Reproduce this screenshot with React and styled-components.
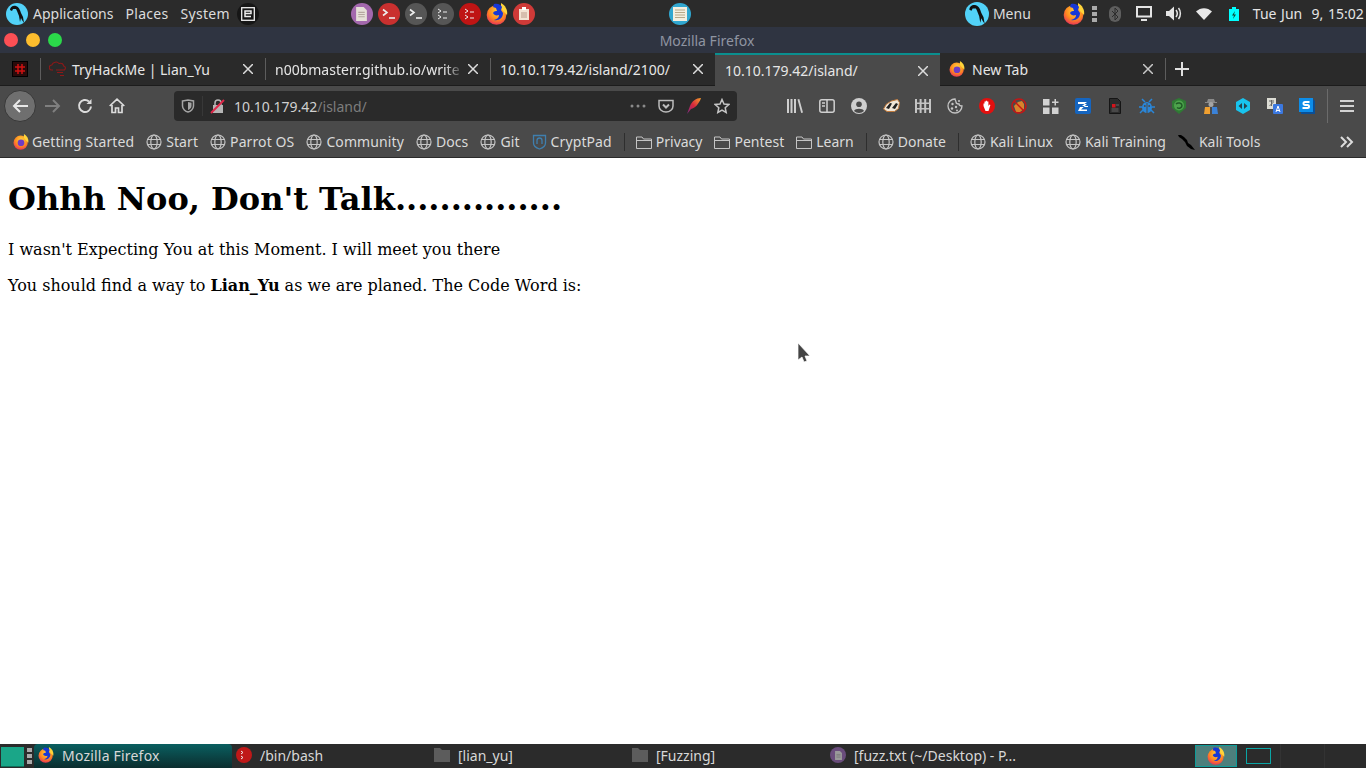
import React from "react";
import styled, { createGlobalStyle } from "styled-components";

const GlobalStyle = createGlobalStyle`
  html, body {
    margin: 0;
    padding: 0;
    height: 100%;
    overflow: hidden;
    background: #fff;
  }
  #root {
    height: 100%;
  }
  svg {
    flex: none;
  }
`;

const Desktop = styled.div`
  position: relative;
  width: 1366px;
  height: 768px;
  display: flex;
  flex-direction: column;
  font-family: "Noto Sans", sans-serif;
  font-size: 14px;
  color: #d8d8d8;
  overflow: hidden;
`;

/* top gnome/mate panel */
const Panel = styled.div`
  height: 27px;
  flex: none;
  background: #2b2b2b;
  display: flex;
  align-items: center;
  padding-left: 6px;
`;

const PanelText = styled.span`
  margin-left: ${(p) => p.$ml || 0}px;
  letter-spacing: ${(p) => p.$ls || 0}px;
  color: #dcdcdc;
  white-space: nowrap;
`;

const Launchers = styled.div`
  display: flex;
  gap: 5px;
  margin-left: ${(p) => p.$ml || 0}px;
`;

const Disc = styled.div`
  width: ${(p) => p.$size || 22}px;
  height: ${(p) => p.$size || 22}px;
  border-radius: 50%;
  background: ${(p) => p.$bg};
  flex: none;
  display: flex;
  align-items: center;
  justify-content: center;
  margin-left: ${(p) => p.$ml || 0}px;
`;

const Tray = styled.div`
  display: flex;
  align-items: center;
  flex: none;
  margin-left: ${(p) => p.$ml || 0}px;
`;

const Clock = styled.span`
  margin-left: 14px;
  color: #e4e4e4;
  white-space: pre;
  word-spacing: 1px;
`;

/* window title */
const TitleBar = styled.div`
  position: relative;
  height: 26px;
  flex: none;
  background: #2f3441;
  display: flex;
  align-items: center;
  justify-content: center;
  padding-left: 48px;
  color: #8f95a1;
`;

const Lights = styled.div`
  position: absolute;
  left: 4px;
  top: 6px;
  display: flex;
  gap: 8px;
`;

const Light = styled.span`
  width: 14px;
  height: 14px;
  border-radius: 50%;
  background: ${(p) => p.$c};
`;

/* firefox tabs */
const TabStrip = styled.div`
  height: 33px;
  flex: none;
  background: #2a2a2a;
  border-bottom: 1px solid #1c1c1c;
  box-sizing: border-box;
  display: flex;
  align-items: stretch;
`;

const PinnedTab = styled.div`
  width: 40px;
  flex: none;
  display: flex;
  align-items: center;
  padding-left: 12px;
  box-sizing: border-box;
`;

const Tab = styled.div`
  width: 225px;
  flex: none;
  box-sizing: border-box;
  position: relative;
  display: flex;
  align-items: center;
  gap: 4px;
  padding: 0 12px 0 ${(p) => (p.$icon ? 9 : 10)}px;
  color: #e6e6e6;
  background: ${(p) => (p.$active ? "#4a4a4a" : "transparent")};
  border-top: ${(p) => (p.$active ? "2px solid #0a8f8f" : "0")};
  margin-bottom: ${(p) => (p.$active ? "-1px" : "0")};
  ${(p) =>
    p.$sep &&
    `&::before {
       content: "";
       position: absolute;
       left: 0;
       top: 5px;
       bottom: 5px;
       width: 1px;
       background: #5d5d5d;
     }`}
`;

const TabFavicon = styled.span`
  display: flex;
  margin-right: 2px;
`;

const TabLabel = styled.span`
  flex: 1;
  min-width: 0;
  white-space: nowrap;
  margin-left: ${(p) => p.$ml || 0}px;
  -webkit-mask-image: ${(p) =>
    p.$fade ? "linear-gradient(90deg, #000 90%, transparent)" : "none"};
  mask-image: ${(p) =>
    p.$fade ? "linear-gradient(90deg, #000 90%, transparent)" : "none"};
`;

const NewTabButton = styled.div`
  width: 34px;
  display: flex;
  align-items: center;
  justify-content: center;
  position: relative;
  &::before {
    content: "";
    position: absolute;
    left: 0;
    top: 5px;
    bottom: 5px;
    width: 1px;
    background: #5d5d5d;
  }
`;

/* nav toolbar */
const Toolbar = styled.div`
  height: 40px;
  flex: none;
  background: #4a4a4a;
  display: flex;
  align-items: center;
  padding-left: 4px;
`;

const BackButton = styled.div`
  width: 32px;
  height: 32px;
  flex: none;
  border-radius: 50%;
  box-sizing: border-box;
  background: #6f6f6f;
  border: 1px solid #383838;
  display: flex;
  align-items: center;
  justify-content: center;
`;

const NavIcon = styled.div`
  width: 16px;
  height: 16px;
  flex: none;
  display: flex;
  margin-left: ${(p) => p.$ml ?? 16}px;
`;

const UrlBar = styled.div`
  width: 563px;
  height: 30px;
  flex: none;
  margin-left: 49px;
  background: #2a2a2a;
  border-radius: 4px;
  display: flex;
  align-items: center;
  padding-left: 7px;
  box-sizing: border-box;
`;

const UrlDivider = styled.span`
  width: 1px;
  height: 20px;
  background: #383838;
  margin: 0 7px 0 7px;
`;

const UrlHost = styled.span`
  margin-left: 8px;
  color: #d0d0d0;
`;

const UrlPath = styled.span`
  color: #7d7d7d;
  flex: 1;
`;

const UrlActions = styled.div`
  display: flex;
  align-items: center;
  gap: 12px;
  padding-right: 7px;
`;

const ExtIcons = styled.div`
  display: flex;
  align-items: center;
  gap: 16px;
  margin-left: 50px;
`;

const ExtSlot = styled.div`
  width: 16px;
  height: 18px;
  flex: none;
  display: flex;
  align-items: center;
  justify-content: center;
`;

const ToolbarSep = styled.span`
  width: 1px;
  height: 34px;
  background: #6b6b6b;
  margin: 0 12px 0 12px;
`;

/* bookmarks */
const BookmarkBar = styled.div`
  height: 32px;
  flex: none;
  box-sizing: border-box;
  background: #4a4a4a;
  border-bottom: 1px solid #2a2a2a;
  display: flex;
  align-items: center;
  padding: 0 12px 0 13px;
  color: #dadada;
`;

const BookmarkGroup = styled.div`
  display: flex;
  align-items: center;
  gap: 12px;
  letter-spacing: ${(p) => p.$ls || 0}px;
`;

const Bookmark = styled.div`
  display: flex;
  align-items: center;
  gap: 4px;
  white-space: nowrap;
`;

const BookmarkFavicon = styled.span`
  display: flex;
  margin-right: -1px;
`;

const BookmarkSep = styled.span`
  width: 1px;
  height: 18px;
  background: #2e2e2e;
  margin: 0 11px 0 12px;
`;

const Chevron = styled.div`
  margin-left: auto;
  display: flex;
`;

/* the page itself */
const Page = styled.main`
  flex: 1;
  background: #fff;
  color: #000;
  font-family: "DejaVu Serif", serif;
  font-size: 16px;
  padding: 23px 8px 0;
  min-height: 0;
`;

const Heading = styled.h1`
  font-size: 32px;
  line-height: 37px;
  margin: 0 0 22px;
  font-weight: 700;
`;

const Para = styled.p`
  font-size: 16px;
  line-height: 19px;
  margin: 0 0 17px;
`;

const Cursor = styled.svg`
  position: absolute;
  left: 796px;
  top: 341px;
`;

/* bottom taskbar */
const Taskbar = styled.div`
  height: 24px;
  flex: none;
  background: #2b2b2b;
  display: flex;
  align-items: stretch;
`;

const ShowDesktop = styled.div`
  width: 23px;
  margin: 3px 0 1px 1px;
  background: #1aa688;
  border-bottom: 1px solid #0e6d5a;
  flex: none;
`;

const Handle = styled.div`
  width: 10px;
  flex: none;
  display: flex;
  align-items: center;
  justify-content: center;
`;

const TaskItem = styled.div`
  width: 198px;
  flex: none;
  box-sizing: border-box;
  display: flex;
  align-items: center;
  gap: 8px;
  padding: 0 0 2px 4px;
  color: #d8d8d8;
  white-space: nowrap;
  letter-spacing: ${(p) => (p.$active ? 0.2 : 0)}px;
  border-radius: ${(p) => (p.$active ? "4px 4px 0 0" : "0")};
  background: ${(p) =>
    p.$active ? "linear-gradient(180deg, #0a5f60 0%, #0b2d2e 100%)" : "none"};
`;

const Pager = styled.div`
  margin-left: auto;
  display: flex;
  align-items: center;
  padding-right: 41px;
`;

const PagerCell = styled.div`
  box-sizing: border-box;
  width: ${(p) => p.$w}px;
  height: ${(p) => p.$h}px;
  border: ${(p) => (p.$on ? "1px solid #0e9c99" : "1px solid #0aa5a5")};
  background: ${(p) => (p.$on ? "#4d7f7c" : "transparent")};
  margin-left: ${(p) => p.$ml || 0}px;
  display: flex;
  align-items: center;
  justify-content: center;
`;

const PagerDivider = styled.span`
  width: 1px;
  height: 24px;
  background: #333;
  margin-left: ${(p) => p.$ml}px;
`;

/* ---- drawings ---- */
const Parrot = ({ size = 22 }) => (
  <svg width={size} height={size} viewBox="0 0 22 22">
    <circle cx="11" cy="11" r="11" fill="#52d2f8" />
    <path
      d="M4 7c0-3 3-5 6-4 3 1 4 4 5 7l2 4 1 6-2-3-1-2-1 4-1-6-2-5-1-2-3 0-1 2z"
      fill="#111"
    />
  </svg>
);

const Firefox = ({ size = 22, purple }) => (
  <svg width={size} height={size} viewBox="0 0 22 22">
    <defs>
      <radialGradient id={purple ? "ffp" : "ffb"} cx="0.55" cy="0.3" r="0.85">
        <stop offset="0" stopColor="#ffd23c" />
        <stop offset="0.5" stopColor="#ff8a1f" />
        <stop offset="0.85" stopColor="#e8305a" />
        <stop offset="1" stopColor="#b52b8e" />
      </radialGradient>
    </defs>
    <circle cx="10.500" cy="12" r="9.800" fill={`url(#${purple ? "ffp" : "ffb"})`} />
    <path d="M15 0c4 2 7 7 6 12l-4-4-2-3z" fill="#ffd43a" />
    {purple ? (
      <circle cx="11" cy="12" r="4.600" fill="#6f3cc4" />
    ) : (
      <path
        d="M8 1c4-1 7 1 8 3l-1 3 2 3c0 5-4 8-9 7 3-1 5-2 5-5-3 1-5 0-6-2 1-2 3-2 4-2l-1-3-3-1z"
        fill="#1737d6"
      />
    )}
  </svg>
);

const Prompt = ({ double }) =>
  double ? (
    <svg width="12" height="12" viewBox="0 0 12 12" fill="none" stroke="#eee" strokeWidth="1">
      <path d="M1 1l3 2-3 2M1 7l3 2-3 2" />
      <path d="M6 4h4M6 10h4" />
    </svg>
  ) : (
    <svg width="14" height="12" viewBox="0 0 14 12" fill="none" stroke="#eee" strokeWidth="1.600">
      <path d="M1 1.500l4 3-4 3" />
      <path d="M7 10h6" />
    </svg>
  );

const Note = ({ fill = "#eee", line = "#999", w = 10, h = 13 }) => (
  <svg width={w} height={h} viewBox="0 0 10 13">
    <path d="M0 0h7l3 3v10H0z" fill={fill} />
    <path d="M2 5h6M2 7h6M2 9h6" stroke={line} strokeWidth="1" />
  </svg>
);

const Clipboard = () => (
  <svg width="10" height="13" viewBox="0 0 10 13">
    <path d="M0 2h10v11H0z" fill="#f3e3d3" />
    <path d="M3 0h4v3H3z" fill="#fff" />
    <path d="M2 6h6M2 8h6M2 10h6" stroke="#b98" strokeWidth="1" />
  </svg>
);

const Articles = () => (
  <svg width="14" height="14" viewBox="0 0 14 14">
    <path d="M0 0h14v14H0z" fill="#f4efe0" />
    <path d="M2 3h10M2 5.500h10M2 8h10M2 10.500h10" stroke="#b8a888" strokeWidth="1" />
  </svg>
);

const Handle3 = ({ h = 4 }) => (
  <svg width="5" height={h * 3 + 4} viewBox={`0 0 5 ${h * 3 + 4}`} fill="#aaa">
    <rect width="5" height={h} />
    <rect y={h + 2} width="5" height={h} />
    <rect y={h * 2 + 4} width="5" height={h} />
  </svg>
);

const TrayBluetooth = () => (
  <svg width="12" height="16" viewBox="0 0 12 16">
    <rect width="12" height="16" rx="6" fill="#5e5e5e" />
    <path d="M3 5l6 6-3 3V2l3 3-6 6" fill="none" stroke="#2b2b2b" strokeWidth="1" />
  </svg>
);

const TrayMonitor = () => (
  <svg width="16" height="15" viewBox="0 0 16 15">
    <path d="M1 1h14v9.500H1z" fill="none" stroke="#e4e4e4" strokeWidth="2" />
    <path d="M5 13h6v2H5z" fill="#e4e4e4" />
  </svg>
);

const TrayVolume = () => (
  <svg width="16" height="15" viewBox="0 0 16 15">
    <path d="M0 5h3l5-4.500v14L3 10H0z" fill="#e4e4e4" />
    <path d="M10 4c1.500 2 1.500 5 0 7M12.500 2c2.500 3 2.500 8 0 11" fill="none" stroke="#e4e4e4" strokeWidth="1.500" />
  </svg>
);

const TrayWifi = () => (
  <svg width="16" height="12" viewBox="0 0 16 12">
    <path d="M0 3.500C4.500-1 11.500-1 16 3.500L8 12z" fill="#e8e8e8" />
  </svg>
);

const TrayBattery = () => (
  <svg width="10" height="14" viewBox="0 0 10 14">
    <path d="M3 0h4v2H3zM0 2h10v12H0z" fill="#0ff" />
    <path d="M6 4L3 8.500h2L4 12l3-4.500H5z" fill="#143" />
  </svg>
);

const Lock = () => (
  <svg width="16" height="16" viewBox="0 0 16 16">
    <path d="M3 7h10v8H3z" fill="#b5b5b5" />
    <path d="M5 7V5a3 3 0 0 1 6 0v2" fill="none" stroke="#b5b5b5" strokeWidth="1.500" />
    <path d="M1 15L14 2" stroke="#e0284a" strokeWidth="2" />
  </svg>
);

const Shield = () => (
  <svg width="14" height="14" viewBox="0 0 14 14">
    <path d="M1.500 2L7 1l5.500 1v5c0 3-3 5.500-5.500 6-2.500-.5-5.500-3-5.500-6z" fill="none" stroke="#a5a5a5" strokeWidth="1.500" />
    <path d="M7 3l3.500.7V7C10.500 9 8.500 10.500 7 11z" fill="#a5a5a5" />
  </svg>
);

const ThreeDots = () => (
  <svg width="16" height="4" viewBox="0 0 16 4" fill="#8a8a8a">
    <circle cx="2" cy="2" r="1.500" />
    <circle cx="8" cy="2" r="1.500" />
    <circle cx="14" cy="2" r="1.500" />
  </svg>
);

const Pocket = () => (
  <svg width="16" height="16" viewBox="0 0 16 16" fill="none" stroke="#bcbcbc" strokeWidth="1.500">
    <path d="M1 2.500h14V8a7 6 0 0 1-14 0z" />
    <path d="M5 6.500l3 3 3-3" strokeWidth="2" />
  </svg>
);

const Feather = () => (
  <svg width="16" height="16" viewBox="0 0 16 16">
    <defs>
      <linearGradient id="fth" x1="1" y1="0" x2="0" y2="1">
        <stop offset="0" stopColor="#f6a02a" />
        <stop offset="0.5" stopColor="#d8263c" />
        <stop offset="1" stopColor="#7a2a8a" />
      </linearGradient>
    </defs>
    <path d="M15 0c-5 0-9 3-11 8L1 16l4-5c4-1 8-5 10-11z" fill="url(#fth)" />
  </svg>
);

const Star = () => (
  <svg width="16" height="16" viewBox="0 0 16 16">
    <path d="M8 1.500l2 4.500 4.800.5-3.600 3.200 1 4.800L8 12.100l-4.200 2.400 1-4.800L1.200 6.500 6 6z" fill="none" stroke="#c5c5c5" strokeWidth="1.500" />
  </svg>
);

const Globe = () => (
  <svg width="16" height="16" viewBox="0 0 16 16" fill="none" stroke="#c4c4c4" strokeWidth="1.200">
    <circle cx="8" cy="8" r="7" />
    <ellipse cx="8" cy="8" rx="3.200" ry="7" />
    <path d="M1.500 5.500h13M1.500 10.500h13" />
  </svg>
);

const Folder = () => (
  <svg width="16" height="16" viewBox="0 0 16 16" fill="none" stroke="#c4c4c4" strokeWidth="1">
    <path d="M.5 14.500V3h5.500l1.500 2h8v9.500z" />
    <path d="M.5 6.500h15" />
  </svg>
);

const CryptPad = () => (
  <svg width="15" height="16" viewBox="0 0 14 16" fill="none" stroke="#3f7fae" strokeWidth="1.300">
    <path d="M1 1.500h12V9c0 3-3 5-6 6-3-1-6-3-6-6z" />
    <path d="M4.500 10V6.500a2.500 2.500 0 0 1 5 0V10" />
  </svg>
);

const KaliDragon = () => (
  <svg width="17" height="16" viewBox="0 0 17 16">
    <path d="M0 1l3 0 3 2 3 3 1 3 3 2 4 5-4-1-4-3-2-4-3-3-3-2z" fill="#000" />
  </svg>
);

const Library = () => (
  <svg width="16" height="16" viewBox="0 0 16 16" fill="#cfcfcf">
    <rect x="0" y="1" width="2" height="14" />
    <rect x="3.500" y="1" width="2" height="14" />
    <rect x="7" y="1" width="2" height="14" />
    <path d="M10.500 1.500l1.800-.6 3.700 13.600-1.800.6z" />
  </svg>
);

const Sidebar = () => (
  <svg width="16" height="16" viewBox="0 0 16 16" fill="none" stroke="#cfcfcf" strokeWidth="1.500">
    <rect x=".8" y="1.800" width="14.400" height="12.400" rx="2" />
    <path d="M8 2v12M3 5h3M3 8h3" />
  </svg>
);

const Account = () => (
  <svg width="16" height="16" viewBox="0 0 16 16">
    <circle cx="8" cy="8" r="8" fill="#cfcfcf" />
    <circle cx="8" cy="6.200" r="2.800" fill="#4a4a4a" />
    <path d="M3 13c1-3 9-3 10 0a7 7 0 0 1-10 0z" fill="#4a4a4a" />
  </svg>
);

const Badger = () => (
  <svg width="17" height="14" viewBox="0 0 17 14">
    <path d="M.5 10l3-5 5-3 6-1.500 2 3-1 6-4 3H4z" fill="#f0e6d8" stroke="#c07a3c" strokeWidth="1" />
    <path d="M3 9l4-5 2 .5L6 10zM9 9l4-5 2 1-3 5z" fill="#222" />
  </svg>
);

const Fence = () => (
  <svg width="16" height="16" viewBox="0 0 16 16" fill="#c4c4c4">
    <rect x="0" y="1" width="2" height="14" />
    <rect x="4.600" y="1" width="2" height="14" />
    <rect x="9.200" y="1" width="2" height="14" />
    <rect x="14" y="1" width="2" height="14" />
    <rect x="0" y="4.500" width="16" height="1.500" />
    <rect x="0" y="10" width="16" height="1.500" />
  </svg>
);

const Cookie = () => (
  <svg width="16" height="16" viewBox="0 0 16 16">
    <path d="M8 1a7 7 0 1 0 7 7c-2 0-3-1-3-2-2 0-3-1-3-2 0-1-1-2-1-3z" fill="none" stroke="#c4c4c4" strokeWidth="1.300" />
    <circle cx="5.500" cy="6" r="1.200" fill="#c4c4c4" />
    <circle cx="5" cy="10.500" r="1.200" fill="#c4c4c4" />
    <circle cx="9" cy="9" r="1.200" fill="#c4c4c4" />
    <circle cx="10" cy="12.500" r="1" fill="#c4c4c4" />
    <circle cx="12" cy="3" r="1" fill="#c4c4c4" />
  </svg>
);

const UBlock = () => (
  <svg width="16" height="16" viewBox="0 0 16 16">
    <circle cx="8" cy="8" r="8" fill="#e3100f" />
    <path d="M4.500 8V5.500h1V7.500V3.500h1.300V7V2.800h1.300V7V3.500h1.300V8l1-1.500 1 .5L9.500 13h-3z" fill="#fff" />
  </svg>
);

const NoScriptFox = () => (
  <svg width="16" height="16" viewBox="0 0 16 16">
    <path d="M3 8l4-4 4-1 2 3 0 5-4 3H5z" fill="#d9822b" />
    <circle cx="8" cy="8" r="7" fill="none" stroke="#c41616" strokeWidth="1.500" />
    <path d="M3 3l10 10" stroke="#c41616" strokeWidth="1.500" />
  </svg>
);

const Containers = () => (
  <svg width="16" height="16" viewBox="0 0 16 16" fill="#d2d2d2">
    <rect x="0" y="1" width="6.500" height="6.500" />
    <rect x="0" y="9.500" width="6.500" height="6.500" />
    <rect x="9" y="9.500" width="6.500" height="6.500" />
    <path d="M11.500 1h1.500v2.500h2.500V5H13v2.500h-1.500V5H9V3.500h2.500z" />
  </svg>
);

const ZapBlock = () => (
  <svg width="16" height="16" viewBox="0 0 16 16">
    <rect width="16" height="16" rx="2" fill="#1565c0" />
    <path d="M3 4h9L7 8h6v1H5l-2 4h9v-1.500H6L12 6H3z" fill="#fff" />
  </svg>
);

const DarkDoc = () => (
  <svg width="12" height="16" viewBox="0 0 12 16">
    <path d="M.5.500h8l3 3v12H.5z" fill="#2b2b2b" stroke="#151515" />
    <rect x="3" y="6" width="3.500" height="3.500" fill="#d4141c" />
    <path d="M7 7h3M2.500 11h7M2.500 13h7" stroke="#666" />
  </svg>
);

const Bug = () => (
  <svg width="16" height="16" viewBox="0 0 16 16" fill="#2a86d8">
    <ellipse cx="8" cy="9.500" rx="5" ry="5.500" />
    <path d="M3 1l3 3M13 1l-3 3M0 9h3M13 9h3M1 15l3-3M15 15l-3-3" stroke="#2a86d8" strokeWidth="1.500" />
    <path d="M8 5v10" stroke="#4a4a4a" />
    <circle cx="5.800" cy="8" r="1" fill="#4a4a4a" />
    <circle cx="10.200" cy="8" r="1" fill="#4a4a4a" />
  </svg>
);

const GreenShield = () => (
  <svg width="16" height="16" viewBox="0 0 16 16">
    <path d="M8 0l7 3v7l-7 6-7-6V3z" fill="#2f7a34" />
    <circle cx="8" cy="7.500" r="5" fill="#4da24c" />
    <path d="M5 6c2-2 6-1 6 1.500S8 11 6 9.500" fill="none" stroke="#1f5a25" strokeWidth="1.500" />
  </svg>
);

const Spy = () => (
  <svg width="16" height="16" viewBox="0 0 16 16">
    <path d="M5 1h6l1 3h2v1H2V4h2z" fill="#8a8a8a" />
    <circle cx="8" cy="6.500" r="2.500" fill="#a5a5a5" />
    <path d="M1 16l1-7h5v7z" fill="#f0a030" />
    <path d="M9 16V9h5l1 7z" fill="#3b82d8" />
  </svg>
);

const Hexa = () => (
  <svg width="16" height="16" viewBox="0 0 16 16">
    <path d="M8 0l7 4v8l-7 4-7-4V4z" fill="#18c4ee" />
    <path d="M7 5v6L3.500 8zM9 5v6l3.500-3z" fill="#26424e" />
  </svg>
);

const Translate = () => (
  <svg width="16" height="16" viewBox="0 0 16 16">
    <rect x="0" y="0" width="9" height="11" fill="#dcdcd4" />
    <path d="M2 3h5M4.500 2v6M2.500 8l4-4" stroke="#666" />
    <rect x="6" y="6" width="10" height="10" rx="1" fill="#3b78e0" />
    <path d="M9 14l2-6 2 6M9.800 12.500h2.500" stroke="#fff" fill="none" />
  </svg>
);

const Stylus = () => (
  <svg width="16" height="16" viewBox="0 0 16 16">
    <path d="M2 16h14V3l-2-2v13H2z" fill="#0b4f96" />
    <rect x="0" y="0" width="14" height="14" fill="#0d8de8" />
    <path d="M10.500 4H6a1.500 1.500 0 0 0 0 3h2.500a1.500 1.500 0 0 1 0 3H3.500" fill="none" stroke="#fff" strokeWidth="2" />
  </svg>
);

const Hamburger = () => (
  <svg width="14" height="12" viewBox="0 0 14 12" fill="#d2d2d2">
    <rect width="14" height="2" />
    <rect y="5" width="14" height="2" />
    <rect y="10" width="14" height="2" />
  </svg>
);

const Cross = ({ color = "#dcdcdc" }) => (
  <svg width="10" height="10" viewBox="0 0 10 10" stroke={color} strokeWidth="1.500">
    <path d="M0 0l10 10M10 0L0 10" />
  </svg>
);

const BOOKMARK_GROUPS = [
  {
    ls: 0.1,
    items: [
      [
        "Getting Started",
        <BookmarkFavicon>
          <Firefox size={16} purple />
        </BookmarkFavicon>,
      ],
      ["Start", <Globe />],
      ["Parrot OS", <Globe />],
      ["Community", <Globe />],
      ["Docs", <Globe />],
      ["Git", <Globe />],
      ["CryptPad", <CryptPad />],
    ],
  },
  {
    items: [
      ["Privacy", <Folder />],
      ["Pentest", <Folder />],
      ["Learn", <Folder />],
    ],
  },
  { items: [["Donate", <Globe />]] },
  {
    items: [
      ["Kali Linux", <Globe />],
      ["Kali Training", <Globe />],
      ["Kali Tools", <KaliDragon />],
    ],
  },
];

const EXTENSIONS = [
  Library,
  Sidebar,
  Account,
  Badger,
  Fence,
  Cookie,
  UBlock,
  NoScriptFox,
  Containers,
  ZapBlock,
  DarkDoc,
  Bug,
  GreenShield,
  Spy,
  Hexa,
  Translate,
  Stylus,
];

const DirIcon = () => (
  <svg width="16" height="14" viewBox="0 0 16 14" fill="#5c5c5c">
    <path d="M0 0h6l2 2h8v12H0z" />
  </svg>
);

const TASKS = [
  { label: "Mozilla Firefox", active: true, icon: <Firefox size={16} /> },
  {
    label: "/bin/bash",
    icon: (
      <Disc $bg="#c01818" $size={16}>
        <svg width="8" height="10" viewBox="0 0 8 10" fill="none" stroke="#eee" strokeWidth="1">
          <path d="M1 1l2 1.500L1 4M1 6l2 1.500L1 9" />
        </svg>
      </Disc>
    ),
  },
  { label: "[lian_yu]", icon: <DirIcon /> },
  { label: "[Fuzzing]", icon: <DirIcon /> },
  {
    label: "[fuzz.txt (~/Desktop) - P...",
    icon: (
      <Disc $bg="#6a4d7c" $size={16}>
        <Note fill="#9a9a9a" line="#777" w={7} h={9} />
      </Disc>
    ),
  },
];

function App() {
  return (
    <Desktop>
      <GlobalStyle />
      <Panel>
        <Parrot />
        <PanelText $ml={5}>Applications</PanelText>
        <PanelText $ml={12} $ls={0.3}>Places</PanelText>
        <PanelText $ml={12} $ls={0.3}>System</PanelText>
        <Disc $bg="#161616" $ml={7}>
          <svg width="14" height="14" viewBox="0 0 14 14" fill="none" stroke="#eee" strokeWidth="1.300">
            <rect x=".7" y=".7" width="12.600" height="12.600" />
            <path d="M4 4h6v2.500H4zM4 6.500v3h6" strokeWidth="1.500" />
          </svg>
        </Disc>
        <Launchers $ml={92}>
          <Disc $bg="#a368ad">
            <Note fill="#e6e0d8" line="#b5a8a0" w={11} h={14} />
          </Disc>
          <Disc $bg="#c9302f">
            <Prompt />
          </Disc>
          <Disc $bg="#565656">
            <Prompt />
          </Disc>
          <Disc $bg="#565656">
            <Prompt double />
          </Disc>
          <Disc $bg="#bf1414">
            <Prompt double />
          </Disc>
          <Firefox />
          <Disc $bg="#cf3a38">
            <Clipboard />
          </Disc>
        </Launchers>
        <Disc $bg="#31a7d0" $ml={134}>
          <Articles />
        </Disc>
        <Tray $ml={274}>
          <Parrot size={24} />
        </Tray>
        <PanelText $ml={4}>Menu</PanelText>
        <Tray $ml={32}>
          <Firefox />
          <Tray $ml={7}>
            <Handle3 />
          </Tray>
          <Tray $ml={12}>
            <TrayBluetooth />
          </Tray>
          <Tray $ml={15}>
            <TrayMonitor />
          </Tray>
          <Tray $ml={14}>
            <TrayVolume />
          </Tray>
          <Tray $ml={14}>
            <TrayWifi />
          </Tray>
          <Tray $ml={17}>
            <TrayBattery />
          </Tray>
          <Clock>Tue Jun  9, 15:02</Clock>
        </Tray>
      </Panel>

      <TitleBar>
        <Lights>
          <Light $c="#fc4f55" />
          <Light $c="#fdbd2e" />
          <Light $c="#2bd94a" />
        </Lights>
        Mozilla Firefox
      </TitleBar>

      <TabStrip>
        <PinnedTab>
          <svg width="16" height="16" viewBox="0 0 16 16">
            <rect x=".5" y=".5" width="15" height="15" fill="#2a0a0a" stroke="#000" />
            <path d="M6 3v10M10 3v10M3 6h10M3 10h10" stroke="#d01212" strokeWidth="1.500" />
          </svg>
        </PinnedTab>
        <Tab $sep $icon>
          <TabFavicon>
            <svg width="17" height="16" viewBox="0 0 17 16" fill="none" stroke="#8f1818" strokeWidth="1.100">
              <path d="M4 9H2.800a2.500 2.500 0 0 1 0-5C4 1 8 0 10 2.500c3-1 4.500 1 4.500 2.500 2 0 2.500 2.500 1 4H7" />
              <path d="M8 11.500h6M11 14.500h4" />
            </svg>
          </TabFavicon>
          <TabLabel>TryHackMe | Lian_Yu</TabLabel>
          <Cross />
        </Tab>
        <Tab $sep>
          <TabLabel $fade>n00bmasterr.github.io/write</TabLabel>
          <Cross />
        </Tab>
        <Tab $sep>
          <TabLabel>10.10.179.42/island/2100/</TabLabel>
          <Cross />
        </Tab>
        <Tab $active>
          <TabLabel>10.10.179.42/island/</TabLabel>
          <Cross />
        </Tab>
        <Tab $icon>
          <Firefox size={16} purple />
          <TabLabel $ml={3}>New Tab</TabLabel>
          <Cross color="#c8c8c8" />
        </Tab>
        <NewTabButton>
          <svg width="14" height="14" viewBox="0 0 14 14" stroke="#e0e0e0" strokeWidth="2">
            <path d="M7 0v14M0 7h14" />
          </svg>
        </NewTabButton>
      </TabStrip>

      <Toolbar>
        <BackButton>
          <svg width="16" height="14" viewBox="0 0 16 14" fill="none" stroke="#e8e8e8" strokeWidth="2">
            <path d="M16 7H2M8 1L2 7l6 6" />
          </svg>
        </BackButton>
        <NavIcon $ml={9}>
          <svg width="16" height="16" viewBox="0 0 16 16" fill="none" stroke="#7f7f7f" strokeWidth="2">
            <path d="M0 8h14M8 2l6 6-6 6" />
          </svg>
        </NavIcon>
        <NavIcon>
          <svg width="16" height="16" viewBox="0 0 16 16" fill="none" stroke="#dcdcdc" strokeWidth="2">
            <path d="M14 8.500A6 6 0 1 1 12 3.500" />
            <path d="M14.500 1v5h-5z" fill="#dcdcdc" stroke="none" />
          </svg>
        </NavIcon>
        <NavIcon>
          <svg width="16" height="16" viewBox="0 0 16 16" fill="none" stroke="#dcdcdc" strokeWidth="1.700">
            <path d="M.7 8L8 1.200 15.300 8M3 7v7.500h3.500V10h3v4.500H13V7" />
          </svg>
        </NavIcon>
        <UrlBar>
          <Shield />
          <UrlDivider />
          <Lock />
          <UrlHost>10.10.179.42</UrlHost>
          <UrlPath>/island/</UrlPath>
          <UrlActions>
            <ThreeDots />
            <Pocket />
            <Feather />
            <Star />
          </UrlActions>
        </UrlBar>
        <ExtIcons>
          {EXTENSIONS.map((Icon) => (
            <ExtSlot key={Icon.name}>
              <Icon />
            </ExtSlot>
          ))}
        </ExtIcons>
        <ToolbarSep />
        <Hamburger />
      </Toolbar>

      <BookmarkBar>
        {BOOKMARK_GROUPS.map((group, i) => (
          <React.Fragment key={group.items[0][0]}>
            {i > 0 && <BookmarkSep />}
            <BookmarkGroup $ls={group.ls}>
              {group.items.map(([label, icon]) => (
                <Bookmark key={label}>
                  {icon}
                  {label}
                </Bookmark>
              ))}
            </BookmarkGroup>
          </React.Fragment>
        ))}
        <Chevron>
          <svg width="14" height="12" viewBox="0 0 14 12" fill="none" stroke="#dcdcdc" strokeWidth="2">
            <path d="M1 1l5 5-5 5M7 1l5 5-5 5" />
          </svg>
        </Chevron>
      </BookmarkBar>

      <Page>
        <Heading>Ohhh Noo, Don't Talk...............</Heading>
        <Para>I wasn't Expecting You at this Moment. I will meet you there</Para>
        <Para>
          You should find a way to <b>Lian_Yu</b> as we are planed. The Code Word is:
        </Para>
      </Page>

      <Cursor width="16" height="24" viewBox="0 0 16 24">
        <path d="M2 2v17l4-3 2 5 3-1-2-5h5z" fill="#444" stroke="#fff" strokeOpacity=".7" strokeWidth="1" />
      </Cursor>

      <Taskbar>
        <ShowDesktop />
        <Handle>
          <Handle3 />
        </Handle>
        {TASKS.map((t) => (
          <TaskItem key={t.label} $active={t.active}>
            {t.icon}
            {t.label}
          </TaskItem>
        ))}
        <Pager>
          <PagerCell $on $w={42} $h={22}>
            <Firefox size={18} />
          </PagerCell>
          <PagerCell $w={25} $h={16} $ml={9} />
          <PagerDivider $ml={9} />
          <PagerDivider $ml={43} />
        </Pager>
      </Taskbar>
    </Desktop>
  );
}

export default App;
